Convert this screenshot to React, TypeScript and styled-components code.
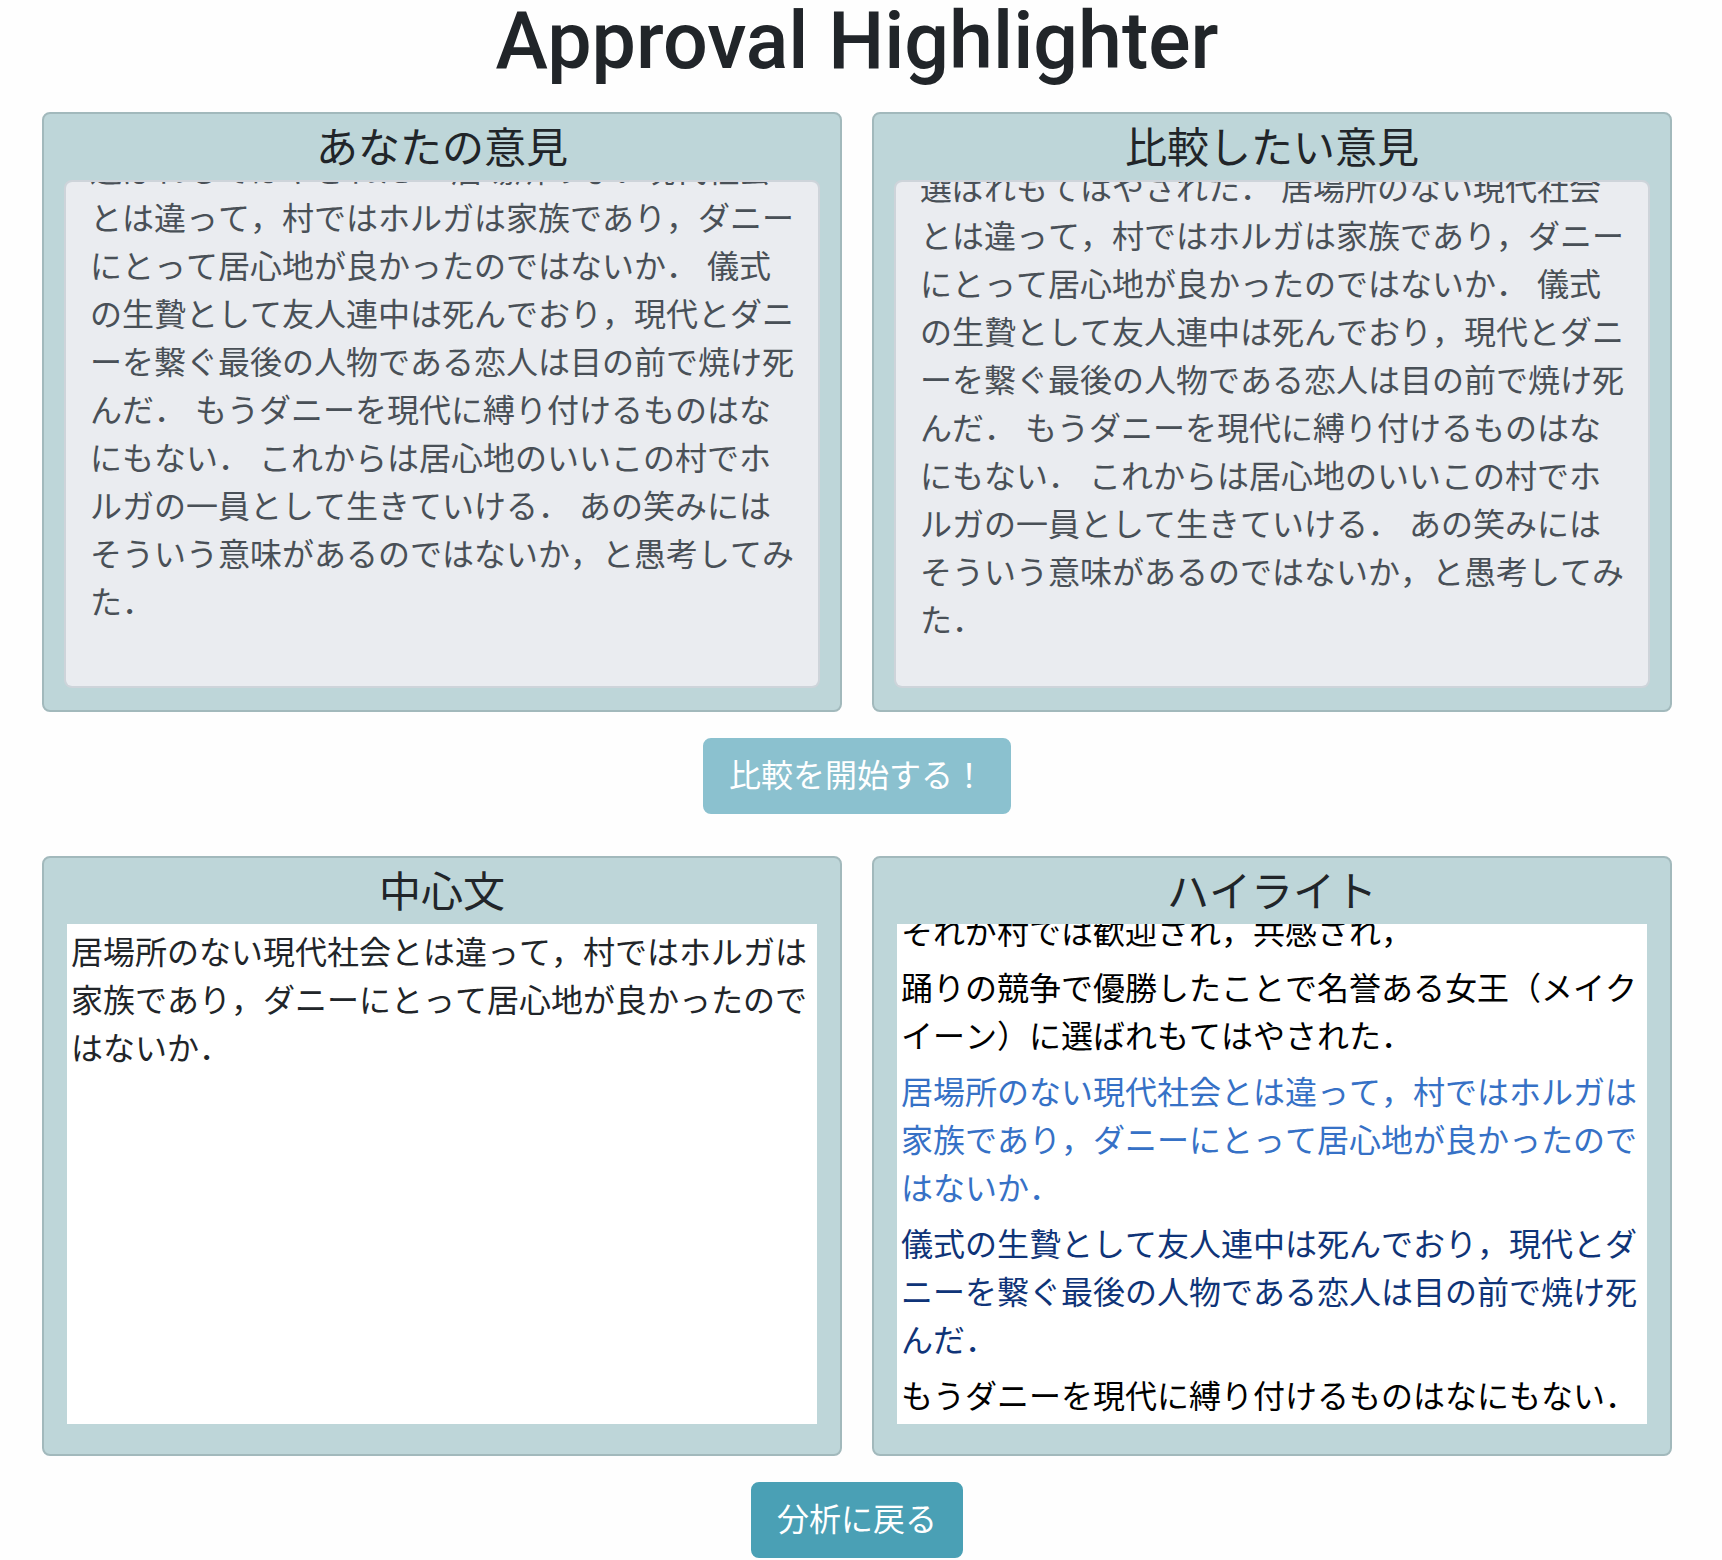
import React, { useLayoutEffect, useRef } from "react";
import styled, { createGlobalStyle } from "styled-components";

const GlobalStyle = createGlobalStyle`
  *, *::before, *::after { box-sizing: border-box; }
  body {
    margin: 0;
    background: #fefefe;
    color: #212529;
    font-family: "Liberation Sans", "Noto Sans CJK JP", sans-serif;
    font-size: 32px;
    font-kerning: none;
    line-height: 48px;
  }
`;

const Page = styled.main`
  padding: 0 50px 0 42px;
`;

const Title = styled.h1`
  margin: 0;
  padding-bottom: 30px;
  font-family: Roboto, sans-serif;
  font-size: 79px;
  font-kerning: normal;
  font-weight: 500;
  line-height: 82px;
  text-align: center;
`;

const Row = styled.div`
  display: grid;
  grid-template-columns: 1fr 1fr;
  gap: 30px;
`;

const Card = styled.section`
  display: flex;
  flex-direction: column;
  height: 600px;
  padding: 0 20px;
  background: #bed6d9;
  border: 2px solid #a2b9bc;
  border-radius: 8px;
`;

const CardTitle = styled.h2`
  margin: 0;
  padding-top: 4px;
  font-size: 42px;
  font-weight: 400;
  line-height: 62px;
  text-align: center;
`;

const Opinion = styled.textarea`
  display: block;
  width: 100%;
  height: 508px;
  padding: 12px 24px;
  border: 2px solid #ced4da;
  border-radius: 8px;
  background: #eaecf0;
  color: #495057;
  font: inherit;
  font-kerning: none;
  resize: none;
  overflow-y: auto;
  scrollbar-width: none;
`;

const Output = styled.div`
  height: 500px;
  margin: 0 3px;
  padding: 5px 4px 3px;
  background: #fff;
  overflow-y: auto;
  scrollbar-width: none;
`;

const tones = { plain: "#212529", neutral: "#000000", blue: "#3671c6", navy: "#0f3478" };
type Tone = keyof typeof tones;

const Sentence = styled.p<{ $tone: Tone }>`
  margin: 0;
  color: ${({ $tone }) => tones[$tone]};

  & + & { margin-top: 8px; }
`;

const Actions = styled.div<{ $spaced?: boolean }>`
  display: flex;
  justify-content: center;
  padding: 26px 0 ${({ $spaced }) => ($spaced ? "42px" : "0")};
`;

const Button = styled.button`
  padding: 12px 24px;
  border: 2px solid #4aa0b5;
  border-radius: 8px;
  background: #4aa0b5;
  color: #fff;
  font: inherit;
  cursor: pointer;

  &:disabled {
    border-color: #8bc1cf;
    background: #8bc1cf;
    cursor: default;
  }
`;

const opinionText =
  "それが村では歓迎され，共感され，踊りの競争で優勝したことで名誉ある女王（メイクイーン）に\n" +
  "選ばれもてはやされた． 居場所のない現代社会とは違って，村ではホルガは家族であり，ダニーにとって居心地が良かったのではないか． " +
  "儀式の生贄として友人連中は死んでおり，現代とダニーを繋ぐ最後の人物である恋人は目の前で焼け死んだ． " +
  "もうダニーを現代に縛り付けるものはなにもない． これからは居心地のいいこの村でホルガの一員として生きていける． " +
  "あの笑みにはそういう意味があるのではないか，と愚考してみた．\n\n";

const centralSentence =
  "居場所のない現代社会とは違って，村ではホルガは家族であり，ダニーにとって居心地が良かったのではないか．";

const highlights: { text: string; tone: Tone }[] = [
  { text: "それが村では歓迎され，共感され，", tone: "neutral" },
  { text: "踊りの競争で優勝したことで名誉ある女王（メイクイーン）に選ばれもてはやされた．", tone: "neutral" },
  { text: centralSentence, tone: "blue" },
  { text: "儀式の生贄として友人連中は死んでおり，現代とダニーを繋ぐ最後の人物である恋人は目の前で焼け死んだ．", tone: "navy" },
  { text: "もうダニーを現代に縛り付けるものはなにもない．", tone: "neutral" },
];

function OpinionCard({ id, title, scroll }: { id: string; title: string; scroll: number }) {
  const box = useRef<HTMLTextAreaElement>(null);
  useLayoutEffect(() => {
    if (box.current) box.current.scrollTop = scroll;
  }, [scroll]);
  return (
    <Card>
      <CardTitle><label htmlFor={id}>{title}</label></CardTitle>
      <Opinion id={id} ref={box} readOnly value={opinionText} />
    </Card>
  );
}

function HighlightCard() {
  const box = useRef<HTMLDivElement>(null);
  useLayoutEffect(() => {
    if (box.current) box.current.scrollTop = box.current.scrollHeight;
  }, []);
  return (
    <Card>
      <CardTitle>ハイライト</CardTitle>
      <Output ref={box}>
        {highlights.map(({ text, tone }) => (
          <Sentence key={text} $tone={tone}>{text}</Sentence>
        ))}
      </Output>
    </Card>
  );
}

export default function App() {
  return (
    <Page lang="ja">
      <GlobalStyle />
      <Title>Approval Highlighter</Title>
      <Row>
        <OpinionCard id="own-opinion" title="あなたの意見" scroll={143} />
        <OpinionCard id="other-opinion" title="比較したい意見" scroll={125} />
      </Row>
      <Actions $spaced>
        <Button type="button" disabled>比較を開始する！</Button>
      </Actions>
      <Row>
        <Card>
          <CardTitle>中心文</CardTitle>
          <Output>
            <Sentence $tone="plain">{centralSentence}</Sentence>
          </Output>
        </Card>
        <HighlightCard />
      </Row>
      <Actions>
        <Button type="button">分析に戻る</Button>
      </Actions>
    </Page>
  );
}
